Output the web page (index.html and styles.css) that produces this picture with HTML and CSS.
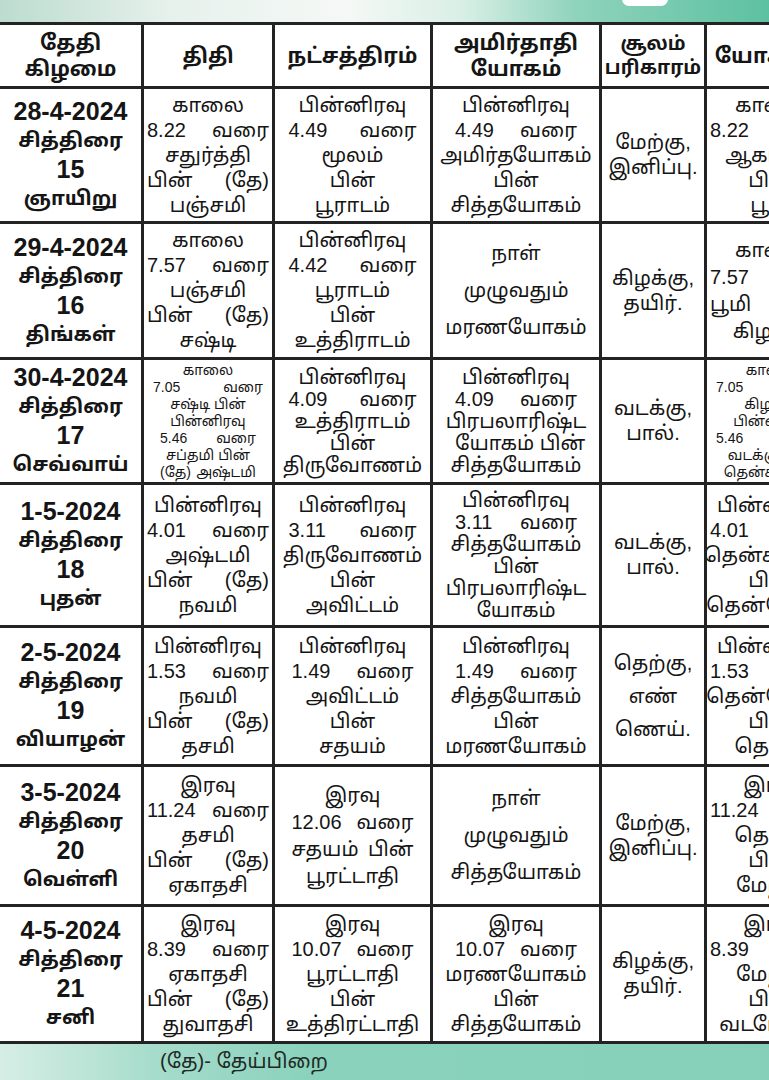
FILE: index.html
```html
<!DOCTYPE html>
<html lang="ta">
<head>
<meta charset="utf-8">
<title>பஞ்சாங்கம்</title>
<link rel="stylesheet" href="styles.css">
</head>
<body>
<div class="page">
  <div class="top-band"><span class="pill"></span></div>
  <div class="grid">
    <div class="cell head"><div>தேதி</div><div>கிழமை</div></div>
    <div class="cell head"><div>திதி</div></div>
    <div class="cell head"><div>நட்சத்திரம்</div></div>
    <div class="cell head"><div>அமிர்தாதி</div><div>யோகம்</div></div>
    <div class="cell head sm-head"><div>சூலம்</div><div>பரிகாரம்</div></div>
    <div class="cell head"><div>யோகினி</div></div>

    <div class="cell date"><div class="num">28-4-2024</div><div class="dt">சித்திரை</div><div class="num">15</div><div class="dt">ஞாயிறு</div></div>
    <div class="cell"><div>காலை</div><div class="j">8.22 வரை</div><div>சதுர்த்தி</div><div class="j">பின் (தே)</div><div>பஞ்சமி</div></div>
    <div class="cell"><div>பின்னிரவு</div><div class="j jw">4.49 வரை</div><div>மூலம்</div><div>பின்</div><div>பூராடம்</div></div>
    <div class="cell"><div>பின்னிரவு</div><div class="j">4.49 வரை</div><div>அமிர்தயோகம்</div><div>பின்</div><div>சித்தயோகம்</div></div>
    <div class="cell"><div>மேற்கு,</div><div>இனிப்பு.</div></div>
    <div class="cell"><div>காலை</div><div class="j">8.22 வரை</div><div>ஆகாயம்</div><div>பின்</div><div>பூமி</div></div>

    <div class="cell date"><div class="num">29-4-2024</div><div class="dt">சித்திரை</div><div class="num">16</div><div class="dt">திங்கள்</div></div>
    <div class="cell"><div>காலை</div><div class="j">7.57 வரை</div><div>பஞ்சமி</div><div class="j">பின் (தே)</div><div>சஷ்டி</div></div>
    <div class="cell"><div>பின்னிரவு</div><div class="j jw">4.42 வரை</div><div>பூராடம்</div><div>பின்</div><div>உத்திராடம்</div></div>
    <div class="cell loose"><div>நாள்</div><div>முழுவதும்</div><div>மரணயோகம்</div></div>
    <div class="cell"><div>கிழக்கு,</div><div>தயிர்.</div></div>
    <div class="cell mid"><div>காலை</div><div class="j">7.57 வரை</div><div class="j">பூமி பின்</div><div>கிழக்கு</div></div>

    <div class="cell date"><div class="num">30-4-2024</div><div class="dt">சித்திரை</div><div class="num">17</div><div class="dt">செவ்வாய்</div></div>
    <div class="cell small"><div>காலை</div><div class="j">7.05 வரை</div><div>சஷ்டி பின்</div><div>பின்னிரவு</div><div class="j j2">5.46 வரை</div><div>சப்தமி பின்</div><div class="j j2">(தே) அஷ்டமி</div></div>
    <div class="cell tight"><div>பின்னிரவு</div><div class="j jw">4.09 வரை</div><div>உத்திராடம்</div><div>பின்</div><div>திருவோணம்</div></div>
    <div class="cell tight"><div>பின்னிரவு</div><div class="j">4.09 வரை</div><div>பிரபலாரிஷ்ட</div><div class="j">யோகம் பின்</div><div>சித்தயோகம்</div></div>
    <div class="cell"><div>வடக்கு,</div><div>பால்.</div></div>
    <div class="cell small"><div>காலை</div><div class="j">7.05 வரை</div><div>கிழக்கு</div><div>பின்னிரவு</div><div class="j">5.46 வரை</div><div>வடக்கு பின்</div><div>தென்கிழக்கு</div></div>

    <div class="cell date"><div class="num">1-5-2024</div><div class="dt">சித்திரை</div><div class="num">18</div><div class="dt">புதன்</div></div>
    <div class="cell"><div>பின்னிரவு</div><div class="j">4.01 வரை</div><div>அஷ்டமி</div><div class="j">பின் (தே)</div><div>நவமி</div></div>
    <div class="cell"><div>பின்னிரவு</div><div class="j jw">3.11 வரை</div><div>திருவோணம்</div><div>பின்</div><div>அவிட்டம்</div></div>
    <div class="cell tight"><div>பின்னிரவு</div><div class="j">3.11 வரை</div><div>சித்தயோகம்</div><div>பின்</div><div>பிரபலாரிஷ்ட</div><div>யோகம்</div></div>
    <div class="cell"><div>வடக்கு,</div><div>பால்.</div></div>
    <div class="cell"><div>பின்னிரவு</div><div class="j">4.01 வரை</div><div>தென்கிழக்கு</div><div>பின்</div><div>தென்மேற்கு</div></div>

    <div class="cell date"><div class="num">2-5-2024</div><div class="dt">சித்திரை</div><div class="num">19</div><div class="dt">வியாழன்</div></div>
    <div class="cell"><div>பின்னிரவு</div><div class="j">1.53 வரை</div><div>நவமி</div><div class="j">பின் (தே)</div><div>தசமி</div></div>
    <div class="cell"><div>பின்னிரவு</div><div class="j">1.49 வரை</div><div>அவிட்டம்</div><div>பின்</div><div>சதயம்</div></div>
    <div class="cell"><div>பின்னிரவு</div><div class="j">1.49 வரை</div><div>சித்தயோகம்</div><div>பின்</div><div>மரணயோகம்</div></div>
    <div class="cell oil"><div>தெற்கு,</div><div>எண்</div><div>ணெய்.</div></div>
    <div class="cell"><div>பின்னிரவு</div><div class="j">1.53 வரை</div><div>தென்மேற்கு</div><div>பின்</div><div>தெற்கு</div></div>

    <div class="cell date"><div class="num">3-5-2024</div><div class="dt">சித்திரை</div><div class="num">20</div><div class="dt">வெள்ளி</div></div>
    <div class="cell"><div>இரவு</div><div class="j">11.24 வரை</div><div>தசமி</div><div class="j">பின் (தே)</div><div>ஏகாதசி</div></div>
    <div class="cell mid"><div>இரவு</div><div class="j">12.06 வரை</div><div class="j">சதயம் பின்</div><div>பூரட்டாதி</div></div>
    <div class="cell loose"><div>நாள்</div><div>முழுவதும்</div><div>சித்தயோகம்</div></div>
    <div class="cell"><div>மேற்கு,</div><div>இனிப்பு.</div></div>
    <div class="cell"><div>இரவு</div><div class="j">11.24 வரை</div><div>தெற்கு</div><div>பின்</div><div>மேற்கு</div></div>

    <div class="cell date"><div class="num">4-5-2024</div><div class="dt">சித்திரை</div><div class="num">21</div><div class="dt">சனி</div></div>
    <div class="cell"><div>இரவு</div><div class="j">8.39 வரை</div><div>ஏகாதசி</div><div class="j">பின் (தே)</div><div>துவாதசி</div></div>
    <div class="cell"><div>இரவு</div><div class="j">10.07 வரை</div><div>பூரட்டாதி</div><div>பின்</div><div>உத்திரட்டாதி</div></div>
    <div class="cell"><div>இரவு</div><div class="j">10.07 வரை</div><div>மரணயோகம்</div><div>பின்</div><div>சித்தயோகம்</div></div>
    <div class="cell"><div>கிழக்கு,</div><div>தயிர்.</div></div>
    <div class="cell"><div>இரவு</div><div class="j">8.39 வரை</div><div>மேற்கு</div><div>பின்</div><div>வடமேற்கு</div></div>
  </div>
  <div class="bottom-band"><span class="note">(தே)- தேய்பிறை</span></div>
</div>
</body>
</html>
```

FILE: styles.css
```css
html, body {
  margin: 0;
  padding: 0;
  background: #ffffff;
}
.page {
  width: 769px;
  height: 1080px;
  overflow: hidden;
  position: relative;
  font-family: "Liberation Sans", "Noto Sans Tamil", "Lohit Tamil", "Noto Sans", sans-serif;
  color: #151515;
  background: #ffffff;
}
.top-band {
  height: 22px;
  background: linear-gradient(90deg, #bcdccf 0%, #e6f1ec 22%, #f5f8f6 45%, #d9efe6 60%, #8fd3bc 75%, #5dc1a1 100%);
  position: relative;
}
.pill {
  position: absolute;
  left: 622px;
  top: -8px;
  width: 46px;
  height: 14px;
  border-radius: 7px;
  background: #ffffff;
}
.grid {
  display: grid;
  width: 835px;
  grid-template-columns: 141px 128px 155px 166px 102px 128px;
  grid-template-rows: 61px 132px 133px 122px 140px 136px 137px 134px;
  gap: 3px;
  padding: 3px 0;
  background: #232323;
}
.cell {
  background: #ffffff;
  display: flex;
  flex-direction: column;
  align-items: center;
  justify-content: center;
  text-align: center;
  font-size: 20px;
  line-height: 25px;
  white-space: nowrap;
  overflow: hidden;
}
.cell .j {
  width: 122px;
  text-align: justify;
  text-align-last: justify;
}
.cell .jw { width: 128px; }
.head {
  font-size: 21px;
  line-height: 26px;
  font-weight: 700;
}
.sm-head {
  font-size: 19px;
  line-height: 24px;
}
.date {
  line-height: 29px;
  font-weight: 700;
}
.date .num {
  font-size: 25px;
}
.date .dt {
  font-size: 20px;
}
.loose { line-height: 37px; }
.mid { line-height: 27px; }
.tight { line-height: 22px; }
.oil { line-height: 33px; }
.small {
  font-size: 14px;
  line-height: 17px;
}
.small .j { width: 110px; }
.small .j2 { width: 96px; }
.bottom-band {
  height: 36px;
  background: linear-gradient(90deg, #d6eee5 0%, #a6dccb 20%, #8ad2bc 40%, #86d0ba 100%);
  display: flex;
  align-items: center;
}
.note {
  margin-left: 160px;
  font-size: 20px;
  color: #1e2a26;
}
```
